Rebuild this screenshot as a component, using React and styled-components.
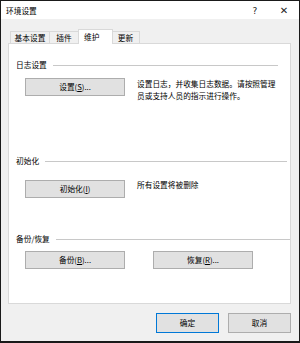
import React from "react";
import styled, { createGlobalStyle } from "styled-components";

const Global = createGlobalStyle`
  html, body { margin: 0; padding: 0; background: #ffffff; }
  * { box-sizing: border-box; }
  body { font-family: "Noto Sans CJK SC", "Noto Sans", sans-serif; }
`;

const Window = styled.div`
  width: 300px;
  height: 343px;
  display: flex;
  flex-direction: column;
  background: #f0f0f0;
  border: 1px solid #1a1a1a;
  border-bottom-width: 2px;
  font-size: 7.7px;
  color: #000;
`;

const TitleBar = styled.div`
  height: 18px;
  flex: none;
  display: flex;
  align-items: center;
  background: #ffffff;
  padding-left: 5px;
  padding-top: 2px;
`;

const Title = styled.span`
  font-size: 7.7px;
  line-height: 1;
`;

const Controls = styled.div`
  margin-left: auto;
  display: flex;
  align-items: center;
`;

const ControlGlyph = styled.span`
  width: ${(p) => p.$w}px;
  text-align: center;
  font-family: "DejaVu Sans", sans-serif;
  font-size: ${(p) => p.$size}px;
  line-height: 1;
  color: #222;
`;

const Body = styled.div`
  flex: 1;
  display: flex;
  flex-direction: column;
  padding: 10px 8px 0 7px;
`;

const TabBar = styled.div`
  display: flex;
  align-items: flex-end;
  height: 15px;
  padding-left: 2px;
  position: relative;
  z-index: 1;
  margin-bottom: -1px;
`;

const Tab = styled.div`
  height: ${(p) => (p.$active ? 15 : 13)}px;
  width: ${(p) => p.$w}px;
  display: flex;
  align-items: center;
  justify-content: ${(p) => (p.$active ? "flex-start" : "center")};
  padding-left: ${(p) => (p.$active ? 5 : 0)}px;
  padding-bottom: ${(p) => (p.$active ? 2 : 0)}px;
  background: ${(p) => (p.$active ? "#ffffff" : "#f0f0f0")};
  border: 1px solid #d9d9d9;
  border-bottom: ${(p) => (p.$active ? "none" : "1px solid #d9d9d9")};
  margin-left: ${(p) => (p.$active ? -1 : 0)}px;
  margin-right: ${(p) => (p.$active ? -1 : 0)}px;
  border-left: ${(p) => (p.$noLeft ? "none" : "1px solid #d9d9d9")};
  white-space: nowrap;
  position: relative;
  z-index: ${(p) => (p.$active ? 2 : 1)};
`;

const Panel = styled.div`
  height: 261px;
  flex: none;
  width: 283px;
  background: #ffffff;
  border: 1px solid #d9d9d9;
  display: flex;
  flex-direction: column;
`;

const Group = styled.div`
  display: flex;
  flex-direction: column;
  margin-top: ${(p) => p.$top}px;
`;

const GroupHeader = styled.div`
  display: flex;
  align-items: center;
  height: 12px;
  padding-left: 7px;
  padding-right: ${(p) => p.$right}px;
`;

const GroupLabel = styled.span`
  white-space: nowrap;
  line-height: 1;
`;

const Rule = styled.div`
  flex: 1;
  height: 1px;
  background: #c8c8c8;
  margin-left: 6px;
`;

const GroupBody = styled.div`
  display: flex;
  align-items: flex-start;
  padding-left: 16px;
  margin-top: ${(p) => p.$gap}px;
  gap: ${(p) => p.$spacing}px;
`;

const Button = styled.button`
  width: ${(p) => p.$w || 100}px;
  height: ${(p) => p.$h || 18}px;
  flex: none;
  background: #e1e1e1;
  border: 1px solid ${(p) => (p.$primary ? "#0078d7" : "#adadad")};
  font-family: "Noto Sans CJK SC", "Noto Sans", sans-serif;
  font-size: 7.7px;
  color: #000;
  padding: 0;
  display: flex;
  align-items: center;
  justify-content: center;
  line-height: 1;
`;

const U = styled.span`
  text-decoration: underline;
`;

const Description = styled.div`
  width: 142px;
  line-height: 12px;
  margin-top: ${(p) => p.$top}px;
`;

const Footer = styled.div`
  display: flex;
  justify-content: flex-end;
  gap: 9px;
  padding-top: 9px;
  padding-right: 0px;
`;

export default function App() {
  return (
    <>
      <Global />
      <Window>
        <TitleBar>
          <Title>环境设置</Title>
          <Controls>
            <ControlGlyph $w={28} $size={9}>?</ControlGlyph>
            <ControlGlyph $w={30} $size={10}>✕</ControlGlyph>
          </Controls>
        </TitleBar>
        <Body>
          <TabBar>
            <Tab $w={40}>基本设置</Tab>
            <Tab $w={29} $noLeft>插件</Tab>
            <Tab $w={35} $active>维护</Tab>
            <Tab $w={28} $noLeft>更新</Tab>
          </TabBar>
          <Panel>
            <Group $top={15}>
              <GroupHeader $right={12}>
                <GroupLabel>日志设置</GroupLabel>
                <Rule />
              </GroupHeader>
              <GroupBody $gap={7} $spacing={12}>
                <Button>
                  设置(<U>S</U>)...
                </Button>
                <Description $top={0}>
                  设置日志，并收集日志数据。请按照管理员或支持人员的指示进行操作。
                </Description>
              </GroupBody>
            </Group>
            <Group $top={53}>
              <GroupHeader $right={3}>
                <GroupLabel>初始化</GroupLabel>
                <Rule />
              </GroupHeader>
              <GroupBody $gap={13} $spacing={12}>
                <Button>
                  初始化(<U>I</U>)
                </Button>
                <Description $top={-1}>所有设置将被删除</Description>
              </GroupBody>
            </Group>
            <Group $top={35}>
              <GroupHeader $right={0}>
                <GroupLabel>备份/恢复</GroupLabel>
                <Rule />
              </GroupHeader>
              <GroupBody $gap={6} $spacing={28}>
                <Button>
                  备份(<U>B</U>)...
                </Button>
                <Button>
                  恢复(<U>R</U>)...
                </Button>
              </GroupBody>
            </Group>
          </Panel>
          <Footer>
            <Button $w={63} $h={20} $primary>
              确定
            </Button>
            <Button $w={63} $h={20}>
              取消
            </Button>
          </Footer>
        </Body>
      </Window>
    </>
  );
}
